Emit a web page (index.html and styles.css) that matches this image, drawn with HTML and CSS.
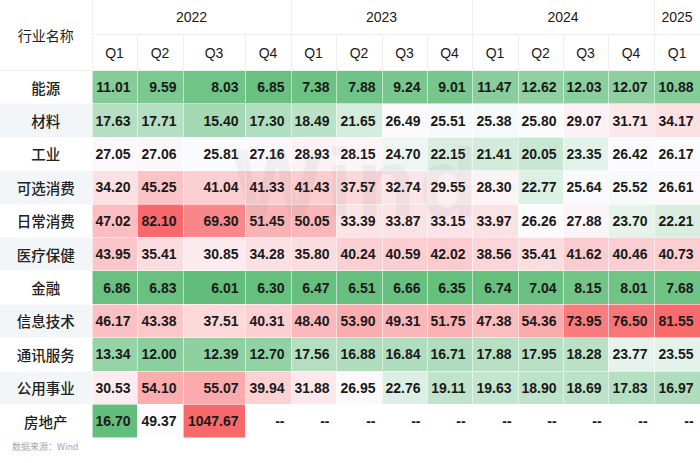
FILE: index.html
```html
<!DOCTYPE html>
<html lang="zh">
<head>
<meta charset="utf-8">
<link rel="stylesheet" href="styles.css">
</head>
<body>
<div class="wrap">
<table class="heat">
<colgroup>
<col class="c-label"><col class="c45"><col class="c46"><col class="c62"><col class="c46">
<col class="c45"><col class="c46"><col class="c45"><col class="c45">
<col class="c46"><col class="c45"><col class="c45"><col class="c46"><col class="c46">
</colgroup>
<thead>
<tr class="yr">
<th class="lab-h" rowspan="2">行业名称</th>
<th colspan="4">2022</th>
<th colspan="4">2023</th>
<th colspan="4">2024</th>
<th>2025</th>
</tr>
<tr class="qr">
<th>Q1</th><th>Q2</th><th>Q3</th><th>Q4</th>
<th>Q1</th><th>Q2</th><th>Q3</th><th>Q4</th>
<th>Q1</th><th>Q2</th><th>Q3</th><th>Q4</th>
<th>Q1</th>
</tr>
</thead>
<tbody>
<tr><th>能源</th><td>11.01</td><td>9.59</td><td>8.03</td><td>6.85</td><td>7.38</td><td>7.88</td><td>9.24</td><td>9.01</td><td>11.47</td><td>12.62</td><td>12.03</td><td>12.07</td><td>10.88</td></tr>
<tr class="alt"><th>材料</th><td>17.63</td><td>17.71</td><td>15.40</td><td>17.30</td><td>18.49</td><td>21.65</td><td>26.49</td><td>25.51</td><td>25.38</td><td>25.80</td><td>29.07</td><td>31.71</td><td>34.17</td></tr>
<tr><th>工业</th><td>27.05</td><td>27.06</td><td>25.81</td><td>27.16</td><td>28.93</td><td>28.15</td><td>24.70</td><td>22.15</td><td>21.41</td><td>20.05</td><td>23.35</td><td>26.42</td><td>26.17</td></tr>
<tr class="alt"><th>可选消费</th><td>34.20</td><td>45.25</td><td>41.04</td><td>41.33</td><td>41.43</td><td>37.57</td><td>32.74</td><td>29.55</td><td>28.30</td><td>22.77</td><td>25.64</td><td>25.52</td><td>26.61</td></tr>
<tr><th>日常消费</th><td>47.02</td><td>82.10</td><td>69.30</td><td>51.45</td><td>50.05</td><td>33.39</td><td>33.87</td><td>33.15</td><td>33.97</td><td>26.26</td><td>27.88</td><td>23.70</td><td>22.21</td></tr>
<tr class="alt"><th>医疗保健</th><td>43.95</td><td>35.41</td><td>30.85</td><td>34.28</td><td>35.80</td><td>40.24</td><td>40.59</td><td>42.02</td><td>38.56</td><td>35.41</td><td>41.62</td><td>40.46</td><td>40.73</td></tr>
<tr><th>金融</th><td>6.86</td><td>6.83</td><td>6.01</td><td>6.30</td><td>6.47</td><td>6.51</td><td>6.66</td><td>6.35</td><td>6.74</td><td>7.04</td><td>8.15</td><td>8.01</td><td>7.68</td></tr>
<tr class="alt"><th>信息技术</th><td>46.17</td><td>43.38</td><td>37.51</td><td>40.31</td><td>48.40</td><td>53.90</td><td>49.31</td><td>51.75</td><td>47.38</td><td>54.36</td><td>73.95</td><td>76.50</td><td>81.55</td></tr>
<tr><th>通讯服务</th><td>13.34</td><td>12.00</td><td>12.39</td><td>12.70</td><td>17.56</td><td>16.88</td><td>16.84</td><td>16.71</td><td>17.88</td><td>17.95</td><td>18.28</td><td>23.77</td><td>23.55</td></tr>
<tr class="alt"><th>公用事业</th><td>30.53</td><td>54.10</td><td>55.07</td><td>39.94</td><td>31.88</td><td>26.95</td><td>22.76</td><td>19.11</td><td>19.63</td><td>18.90</td><td>18.69</td><td>17.83</td><td>16.97</td></tr>
<tr class="own"><th>房地产</th><td>16.70</td><td>49.37</td><td>1047.67</td><td>--</td><td>--</td><td>--</td><td>--</td><td>--</td><td>--</td><td>--</td><td>--</td><td>--</td><td>--</td></tr>
</tbody>
</table>
<div class="wm" aria-hidden="true">Wind</div>
<p class="src">数据来源：Wind</p>
</div>
<script src="script.js"></script>
</body>
</html>
```

FILE: styles.css
```css
html, body {
  margin: 0;
  padding: 0;
  background: #ffffff;
}
.wrap {
  position: relative;
  width: 700px;
  height: 463px;
  overflow: hidden;
  font-family: "Liberation Sans", Arial, "Noto Sans CJK SC", sans-serif;
  color: #1a1a1a;
}
.heat {
  width: 700px;
  table-layout: fixed;
  border-collapse: collapse;
}
.c-label { width: 92px; }
.c45 { width: 45px; }
.c46 { width: 46px; }
.c62 { width: 62px; }
.heat thead th {
  font-weight: normal;
  font-size: 14px;
  text-align: center;
  border: 1px solid #efefef;
  padding: 0;
}
.heat thead tr:first-child th { border-top: none; }
.heat thead .lab-h { border-left: none; }
.yr th { height: 34px; }
.qr th { height: 35px; }
.lab-h, .heat tbody th {
  font-family: "Noto Sans CJK SC", sans-serif;
  font-size: 14.5px;
  font-weight: 500;
  text-align: center;
  color: #222;
}
.heat tbody th {
  height: 32.4px;
  padding: 0;
  border-bottom: 1px solid #fafafa;
}
.heat tbody tr.alt th { background: #f3f6f8; }
.heat tbody td {
  font-size: 14px;
  font-weight: bold;
  text-align: right;
  padding: 0 6px 0 0;
  border: 1px solid rgba(255,255,255,0.55);
  white-space: nowrap;
}
.wm {
  position: absolute;
  left: 232px;
  top: 128px;
  font-family: "Liberation Sans", Arial, sans-serif;
  font-weight: bold;
  font-size: 96px;
  letter-spacing: 4px;
  color: rgba(110, 110, 110, 0.07);
  pointer-events: none;
}
.src {
  margin: 0;
  padding: 2px 0 0 12px;
  font-family: "Noto Sans CJK SC", sans-serif;
  font-size: 9px;
  line-height: 13px;
  color: #a8a8a8;
}
```

FILE: script.js
```js
(function () {
  var G = [99, 190, 123], W = [252, 252, 255], R = [248, 105, 107];
  function mix(a, b, t) {
    return 'rgb(' + [0, 1, 2].map(function (i) {
      return Math.round(a[i] + (b[i] - a[i]) * t);
    }).join(',') + ')';
  }
  function color(v, lo, mid, hi, gamma) {
    if (v <= mid) {
      var t = Math.min(1, (mid - v) / (mid - lo));
      return mix(W, G, Math.pow(t, gamma));
    }
    var u = Math.min(1, (v - mid) / (hi - mid));
    return mix(W, R, Math.pow(u, gamma));
  }
  document.querySelectorAll('.heat tbody tr').forEach(function (tr) {
    var own = tr.classList.contains('own');
    tr.querySelectorAll('td').forEach(function (td) {
      var v = parseFloat(td.textContent);
      if (isNaN(v)) return;
      td.style.background = own
        ? color(v, 16.7, 49.37, 1047.67, 1)
        : color(v, 6.01, 26, 82.1, 0.88);
    });
  });
})();
```
